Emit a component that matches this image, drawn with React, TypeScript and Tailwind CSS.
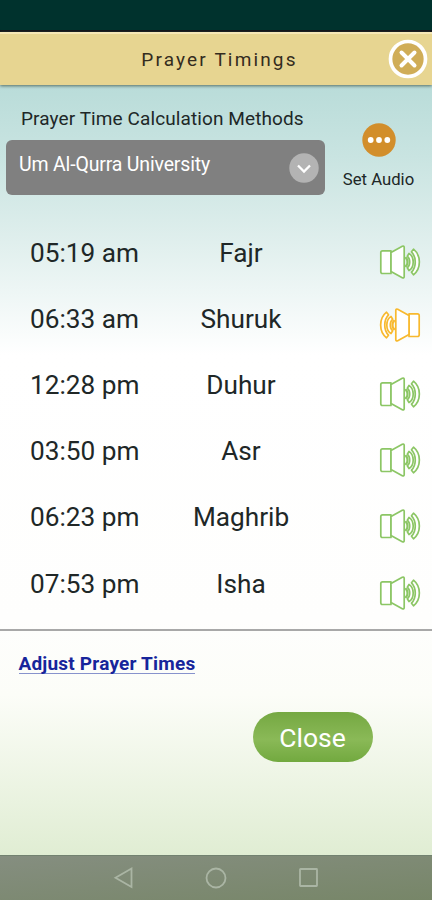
type Prayer = { time: string; name: string; muted?: boolean };

const prayers: Prayer[] = [
  { time: "05:19 am", name: "Fajr" },
  { time: "06:33 am", name: "Shuruk", muted: true },
  { time: "12:28 pm", name: "Duhur" },
  { time: "03:50 pm", name: "Asr" },
  { time: "06:23 pm", name: "Maghrib" },
  { time: "07:53 pm", name: "Isha" },
];

function Speaker({ muted }: { muted?: boolean }) {
  return (
    <svg
      viewBox="0 0 42 36"
      fill="none"
      strokeWidth="1.7"
      strokeLinejoin="round"
      strokeLinecap="round"
      className={muted ? "h-9 w-[42px] -scale-x-100 text-[#f8b92e]" : "h-9 w-[42px] text-[#8cc665]"}
      stroke="currentColor"
    >
      <path fill="white" d="M3.500 6.800h8.500v22.700H3.500q-1.700 0-1.700-1.700V8.500q0-1.700 1.700-1.700Z" />
      <path fill="white" d="M12 8.500 23.300 2.300q1.900-.8 1.900 1.200v29q0 2-1.900 1.200L12 27.500Z" />
      <path strokeWidth="2.2" d="M27 14c2 1.500 2 6.500 0 8" />
      <path fill="white" d="M30 9.500c5.600 3.400 5.600 13.600 0 17l-1.700-2.700c3.200-2.400 3.200-9.200 0-11.600Z" />
      <path fill="white" d="M34.500 5.200c7.800 6.300 7.800 19.300 0 25.600l-2-2.600c5-5.200 5-15.200 0-20.400Z" />
    </svg>
  );
}

export default function App() {
  return (
    <div className="flex h-[900px] w-full flex-col overflow-hidden bg-white font-['Roboto',sans-serif] text-[#202727]">
      <div className="h-8 shrink-0 border-b-2 border-[#101216] bg-[#00322d]" />

      <header className="z-10 grid h-[53px] shrink-0 grid-cols-[44px_1fr_44px] items-center border-t-2 border-[#f5e7b6] bg-[#e7d591] shadow-[0_1px_3px_#536c62]">
        <span />
        <h1 className="pl-[7px] text-center text-[19px] leading-6 tracking-[2.15px] text-[#342c1e]">Prayer Timings</h1>
        <button aria-label="Close" className="-mt-[2px] h-10 w-10">
          <svg viewBox="0 0 40 40" fill="none" className="h-10 w-10">
            <circle cx="20" cy="20" r="17.500" fill="#d0ad57" stroke="white" strokeWidth="3.700" />
            <path d="m13.500 13.500 13 13m0-13-13 13" stroke="white" strokeWidth="4" strokeLinecap="round" />
          </svg>
        </button>
      </header>

      <main className="flex h-[770px] shrink-0 flex-col bg-[linear-gradient(#b9dcd9_0px,#c9e4e1_72px,#deeeec_150px,#ffffff_270px,#fefefd_535px,#fcfdf8_610px,#e0edd3_770px)]">
        <section className="flex h-[135px] shrink-0">
          <div className="flex w-[325px] flex-col pl-[6px] pt-[22px]">
            <h2 className="pl-[15px] text-[19px] leading-6 tracking-[0.1px]">Prayer Time Calculation Methods</h2>
            <button className="mt-[9px] flex h-[55px] items-center justify-between rounded-[6px] bg-[#808080] pl-[13px] pr-[6px] text-white">
              <span className="pb-[5px] text-[19.500px] leading-6 tracking-[-0.17px]">Um Al-Qurra University</span>
              <svg viewBox="0 0 30 30" fill="none" className="h-[30px] w-[30px]">
                <circle cx="15" cy="15" r="14.700" fill="#b3b3b3" />
                <path d="m9 12.500 6 6 6-6" stroke="white" strokeWidth="2.300" />
              </svg>
            </button>
          </div>
          <div className="flex flex-1 flex-col items-center pt-[38px]">
            <svg viewBox="0 0 34 34" className="h-[34px] w-[34px]">
              <circle cx="17" cy="17" r="16.700" fill="#d28e2b" />
              <circle cx="8.700" cy="17" r="2.900" fill="white" />
              <circle cx="17" cy="17" r="2.900" fill="white" />
              <circle cx="25.300" cy="17" r="2.900" fill="white" />
            </svg>
            <span className="mt-[13px] text-[16.700px] leading-5">Set Audio</span>
          </div>
        </section>

        <ul className="flex h-[411px] shrink-0 flex-col border-b-2 border-[#a8a8a8]">
          {prayers.map((prayer) => (
            <li key={prayer.name} className="grid h-[66.100px] grid-cols-[140px_202px_1fr] items-center">
              <span className="pl-[30px] text-[26.200px] leading-8">{prayer.time}</span>
              <span className="text-center text-[26.200px] leading-8">{prayer.name}</span>
              <span className={prayer.muted ? "pl-[37px] pt-[12px]" : "pl-[37px] pt-[18px]"}>
                <Speaker muted={prayer.muted} />
              </span>
            </li>
          ))}
        </ul>

        <section className="flex flex-col items-start pl-[18.500px] pt-[23px]">
          <a
            href="#adjust"
            className="border-b border-[#8792cc] text-[19px] font-bold leading-[19px] tracking-[0.2px] text-[#17259b]"
          >
            Adjust Prayer Times
          </a>
          <button className="ml-[234px] mt-[38px] h-[50px] w-[120px] rounded-full bg-[linear-gradient(#75a842,#8ab957_55%,#72a93f)] pt-[2px] text-[26.500px] leading-8 text-white">
            Close
          </button>
        </section>
      </main>

      <nav className="flex h-[45px] shrink-0 items-center justify-between border-t border-[#728270] bg-[linear-gradient(175deg,#858e80,#778668)] pl-[113px] pr-[113px] text-[#aab5a4]">
        <svg viewBox="0 0 22 24" className="h-6 w-[22px]" fill="none" stroke="currentColor" strokeWidth="1.800">
          <path d="M18.500 2.500v18.500L2.500 11.800Z" />
        </svg>
        <svg viewBox="0 0 24 24" className="h-6 w-6" fill="none" stroke="currentColor" strokeWidth="1.800">
          <circle cx="12" cy="12" r="9.500" />
        </svg>
        <svg viewBox="0 0 22 22" className="h-[22px] w-[22px]" fill="none" stroke="currentColor" strokeWidth="1.800">
          <rect x="3" y="2" width="17" height="17" rx=".5" />
        </svg>
      </nav>
    </div>
  );
}
